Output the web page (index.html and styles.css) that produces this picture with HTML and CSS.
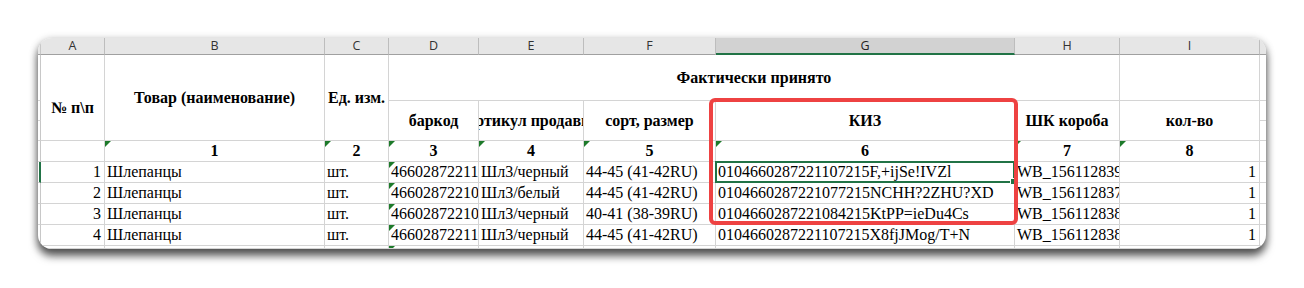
FILE: index.html
```html
<!DOCTYPE html>
<html lang="ru">
<head>
<meta charset="utf-8">
<title>Лист</title>
<link rel="stylesheet" href="styles.css">
</head>
<body>
<div class="stage">
  <div class="card">
    <div class="sheet">
      <!-- column header row -->
      <div class="c h strip"></div>
      <div class="c h">A</div>
      <div class="c h">B</div>
      <div class="c h">C</div>
      <div class="c h">D</div>
      <div class="c h">E</div>
      <div class="c h">F</div>
      <div class="c h hsel">G</div>
      <div class="c h">H</div>
      <div class="c h">I</div>
      <div class="c h last"></div>

      <!-- header row a -->
      <div class="c strip"></div>
      <div class="c hd r3 lowtext">№ п\п</div>
      <div class="c hd r3">Товар (наименование)</div>
      <div class="c hd r3">Ед. изм.</div>
      <div class="c hd span5">Фактически принято</div>
      <div class="c"></div>
      <div class="c last"></div>

      <!-- header row b -->
      <div class="c strip"></div>
      <div class="c hd r2">баркод</div>
      <div class="c hd r2">Артикул продавца</div>
      <div class="c hd r2">сорт, размер</div>
      <div class="c hd r2">КИЗ</div>
      <div class="c hd r2">ШК короба</div>
      <div class="c hd r2">кол-во</div>
      <div class="c last"></div>

      <!-- header row c -->
      <div class="c strip"></div>
      <div class="c last"></div>

      <!-- numbers row -->
      <div class="c strip"></div>
      <div class="c"></div>
      <div class="c num tri">1</div>
      <div class="c num tri">2</div>
      <div class="c num tri">3</div>
      <div class="c num tri">4</div>
      <div class="c num tri">5</div>
      <div class="c num tri">6</div>
      <div class="c num tri">7</div>
      <div class="c num tri">8</div>
      <div class="c last"></div>

      <!-- data row 1 -->
      <div class="c strip rowsel"></div>
      <div class="c d right">1</div>
      <div class="c d">Шлепанцы</div>
      <div class="c d">шт.</div>
      <div class="c d tri">4660287221107</div>
      <div class="c d">Шл3/черный</div>
      <div class="c d">44-45 (41-42RU)</div>
      <div class="c d selcell">0104660287221107215F,+ijSe!IVZl<span class="sel"><span class="handle"></span></span></div>
      <div class="c d">WB_1561128391</div>
      <div class="c d right">1</div>
      <div class="c last"></div>

      <!-- data row 2 -->
      <div class="c strip"></div>
      <div class="c d right">2</div>
      <div class="c d">Шлепанцы</div>
      <div class="c d">шт.</div>
      <div class="c d tri">4660287221077</div>
      <div class="c d">Шл3/белый</div>
      <div class="c d">44-45 (41-42RU)</div>
      <div class="c d">0104660287221077215NCHH?2ZHU?XD</div>
      <div class="c d">WB_1561128377</div>
      <div class="c d right">1</div>
      <div class="c last"></div>

      <!-- data row 3 -->
      <div class="c strip"></div>
      <div class="c d right">3</div>
      <div class="c d">Шлепанцы</div>
      <div class="c d">шт.</div>
      <div class="c d tri">4660287221084</div>
      <div class="c d">Шл3/черный</div>
      <div class="c d">40-41 (38-39RU)</div>
      <div class="c d">0104660287221084215KtPP=ieDu4Cs</div>
      <div class="c d">WB_1561128388</div>
      <div class="c d right">1</div>
      <div class="c last"></div>

      <!-- data row 4 -->
      <div class="c strip"></div>
      <div class="c d right">4</div>
      <div class="c d">Шлепанцы</div>
      <div class="c d">шт.</div>
      <div class="c d tri">4660287221107</div>
      <div class="c d">Шл3/черный</div>
      <div class="c d">44-45 (41-42RU)</div>
      <div class="c d">0104660287221107215X8fjJMog/T+N</div>
      <div class="c d">WB_1561128388</div>
      <div class="c d right">1</div>
      <div class="c last"></div>

      <!-- partial row -->
      <div class="c strip"></div>
      <div class="c"></div>
      <div class="c"></div>
      <div class="c"></div>
      <div class="c tri"></div>
      <div class="c"></div>
      <div class="c"></div>
      <div class="c"></div>
      <div class="c"></div>
      <div class="c"></div>
      <div class="c last"></div>
    </div>
    <div class="highlight"></div>
  </div>
</div>
</body>
</html>
```

FILE: styles.css
```css
html, body {
  margin: 0;
  padding: 0;
  background: #ffffff;
}

.stage {
  width: 1304px;
  height: 288px;
  padding: 38px 0 0 38px;
  box-sizing: border-box;
}

.card {
  position: relative;
  width: 1228px;
  height: 211px;
  border-radius: 14px;
  overflow: hidden;
  background: #ffffff;
  box-shadow: 0 7px 9px rgba(0, 0, 0, 0.6), 0 2px 8px rgba(0, 0, 0, 0.3);
}

.sheet {
  display: grid;
  grid-template-columns: 3px 64px 220px 64px 90px 105px 132px 299px 105px 140px 1fr;
  grid-template-rows: 17px 46px 20px 20px 21px 21px 21px 21px 21px 1fr;
  height: 100%;
  font-family: "Liberation Serif", "Times New Roman", serif;
  font-size: 16px;
  color: #000;
}

.c {
  position: relative;
  box-sizing: border-box;
  border-right: 1px solid #d4d4d4;
  border-bottom: 1px solid #d4d4d4;
  overflow: hidden;
  white-space: nowrap;
  min-width: 0;
}

.c.last {
  border-right: none;
}

.h {
  background: #e6e6e6;
  border-bottom: 1px solid #a0a0a0;
  border-right: 1px solid #bdbdbd;
  font-family: "Open Sans", "Noto Sans", sans-serif;
  font-size: 12.5px;
  color: #333;
  display: flex;
  align-items: center;
  justify-content: center;
  line-height: 16px;
}

.h.hsel {
  background: #d2d2d2;
  border-bottom: 2px solid #217346;
  color: #222;
}

.strip {
  border-right: 1px solid #c8c8c8;
}

.strip.rowsel {
  border-right: 2px solid #217346;
}

.hd {
  font-weight: bold;
  display: flex;
  align-items: center;
  justify-content: center;
}

.r3 {
  grid-row: span 3;
}

.r2 {
  grid-row: span 2;
}

.span5 {
  grid-column: span 5;
}

.lowtext {
  padding-top: 20px;
}

.num {
  font-weight: bold;
  display: flex;
  align-items: center;
  justify-content: center;
  line-height: 18px;
}

.d {
  display: flex;
  align-items: flex-end;
  line-height: 18px;
  padding: 0 3px 1px 2px;
}

.d.right {
  justify-content: flex-end;
}

.tri::before {
  content: "";
  position: absolute;
  top: 0;
  left: 0;
  width: 0;
  height: 0;
  border-top: 6px solid #1d7a2a;
  border-right: 6px solid transparent;
}

.selcell {
  overflow: visible;
}

.sel {
  position: absolute;
  top: -1px;
  left: -1px;
  right: -1px;
  bottom: -1px;
  border: 2px solid #217346;
  pointer-events: none;
}

.handle {
  position: absolute;
  right: -4px;
  bottom: -4px;
  width: 5px;
  height: 5px;
  background: #217346;
  border: 1px solid #fff;
}

.highlight {
  position: absolute;
  left: 671px;
  top: 60px;
  width: 309px;
  height: 127px;
  box-sizing: border-box;
  border: 4px solid #ee4242;
  border-radius: 6px;
  pointer-events: none;
}
```
